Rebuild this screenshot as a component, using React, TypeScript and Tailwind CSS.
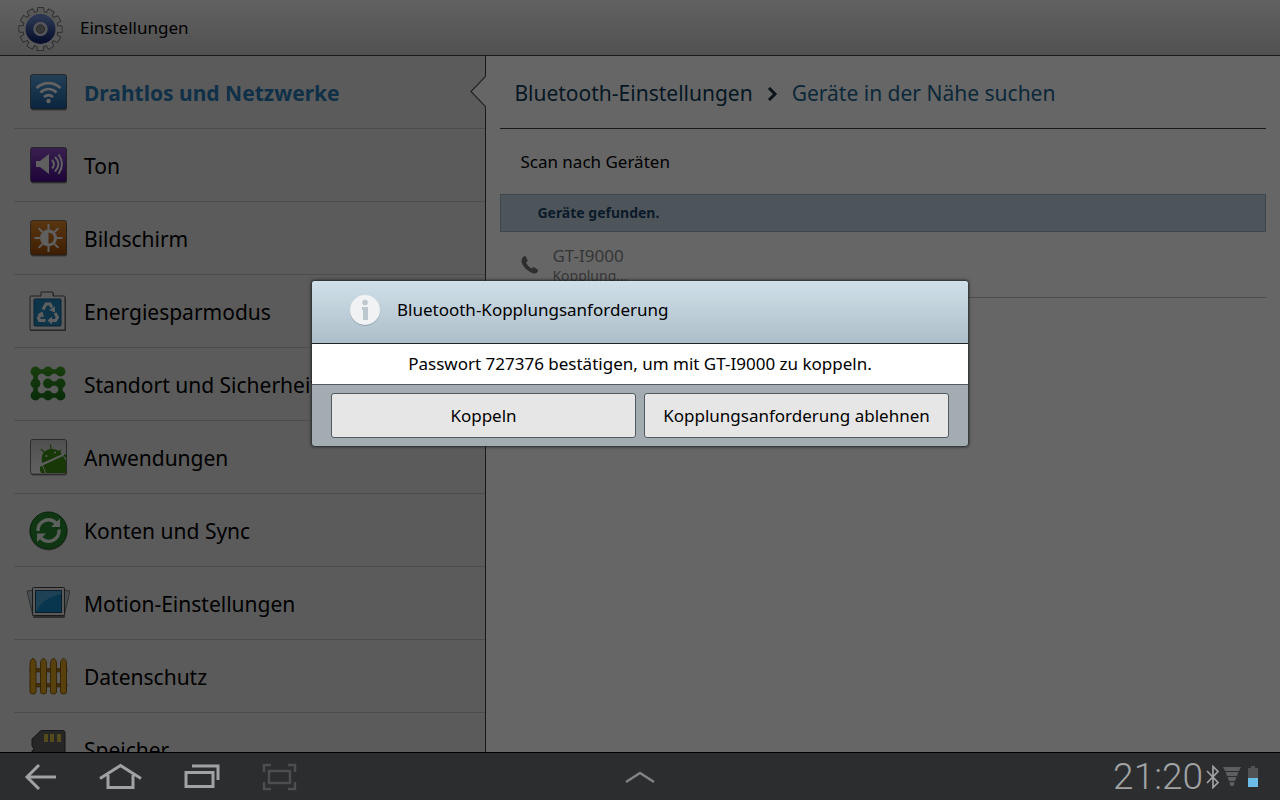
import type { ReactNode } from "react";

type SettingsItem = {
  id: string;
  label: string;
  icon: ReactNode;
};

function Tile({ id, from, to, children }: { id: string; from: string; to: string; children: ReactNode }) {
  return (
    <svg viewBox="0 0 44 44" className="h-11 w-11 shrink-0" aria-hidden>
      <defs>
        <linearGradient id={id} x1="0" y1="0" x2="0" y2="1">
          <stop offset="0" stopColor={from} />
          <stop offset="1" stopColor={to} />
        </linearGradient>
      </defs>
      <rect x="5" y="6" width="36" height="34.500" rx="2" fill="#888" />
      <rect x="4.500" y="4.500" width="36" height="34.500" rx="2" fill={`url(#${id})`} stroke="#444" strokeOpacity="0.7" />
      {children}
    </svg>
  );
}

function IconGear() {
  return (
    <svg viewBox="0 0 48 48" className="h-12 w-12 shrink-0" aria-hidden>
      <defs>
        <linearGradient id="gear-ring" x1="0" y1="0" x2="0" y2="1">
          <stop offset="0" stopColor="#6b88cc" />
          <stop offset="1" stopColor="#142a70" />
        </linearGradient>
      </defs>
      <g fill="#dcdcdc" stroke="#7a7a7a" strokeWidth="1.200" strokeLinejoin="round">
        {[0, 30, 60, 90, 120, 150, 180, 210, 240, 270, 300, 330].map((angle) => (
          <path key={angle} d="M21 9l.7-5.500h6L28 9z" transform={`rotate(${angle} 24.500 25)`} />
        ))}
        <circle cx="24.500" cy="25" r="17.500" />
      </g>
      <g fill="#dcdcdc">
        {[0, 30, 60, 90, 120, 150, 180, 210, 240, 270, 300, 330].map((angle) => (
          <path key={angle} d="M21.700 10l.6-6h4.800l.6 6z" transform={`rotate(${angle} 24.500 25)`} />
        ))}
        <circle cx="24.500" cy="25" r="17" />
      </g>
      <circle cx="24.500" cy="25" r="11" fill="none" stroke="url(#gear-ring)" strokeWidth="8" />
      <circle cx="24.500" cy="25" r="5.700" fill="#8a8a8a" stroke="#d0d4dc" strokeWidth="2.800" />
      <circle cx="24.500" cy="25" r="4.200" fill="none" stroke="#5a5a5a" strokeWidth="0.800" />
    </svg>
  );
}

function IconWifi() {
  return (
    <Tile id="tile-wifi" from="#5aa3dc" to="#1c5a9c">
      <g fill="none" stroke="#f4f4f4" strokeWidth="2.800">
        <path d="M10.500 18c7-6.500 17-6.500 24 0" />
        <path d="M14.500 22.500c5-4.500 11-4.500 16 0" />
        <path d="M18 27c3-2.500 6-2.500 9 0" />
      </g>
      <circle cx="22.500" cy="31" r="2.200" fill="#f4f4f4" />
    </Tile>
  );
}

function IconSound() {
  return (
    <Tile id="tile-sound" from="#8d50c8" to="#4a0a8c">
      <path d="M10 18h4l9-7v20l-9-7h-4z" fill="#eee" />
      <path d="M26 17q4 4.500 0 8.500M29 14q7 7 0 14.500M32.500 11.500q7 9 0 19.500" fill="none" stroke="#eee" strokeWidth="2" />
    </Tile>
  );
}

function IconDisplay() {
  return (
    <Tile id="tile-display" from="#e0882a" to="#9c4c08">
      <g stroke="#eee" strokeWidth="2">
        {[0, 45, 90, 135, 180, 225, 270, 315].map((angle) => (
          <path key={angle} d="M22.500 8v6" transform={`rotate(${angle} 22.500 22)`} />
        ))}
        <circle cx="22.500" cy="22" r="7" fill="none" strokeWidth="3" />
      </g>
      <path d="M22.500 15a7 7 0 000 14z" fill="#eee" />
    </Tile>
  );
}

function IconEnergy() {
  return (
    <svg viewBox="0 -1 44 44" className="h-11 w-11 shrink-0" aria-hidden>
      <path d="M5 7h11V3h12v4h11q1 0 1 1v33H4V8q0-1 1-1z" fill="#777" />
      <path d="M5 6h10V2h12v4h11q1 0 1 1v32q0 1-1 1H5q-1 0-1-1V7q0-1 1-1z" fill="#e6e6e6" stroke="#555" />
      <rect x="8" y="9" width="27" height="27" rx="1" fill="#2482b8" stroke="#145a88" />
      <g fill="none" stroke="#f0f0f0" strokeWidth="3">
        <path d="M17 19.500l3-5.500h4l2 3.500" />
        <path d="M29 23l2.500 4.500-2 3h-4" />
        <path d="M19.500 30.500h-6l-1-2.500 2.500-4" />
      </g>
      <path d="M23 20l6-3.500v6zM26 26.500v8l-4.500-4zM11.500 24.500l5-3 1.500 6z" fill="#f0f0f0" />
    </svg>
  );
}

function IconSecurity() {
  return (
    <svg viewBox="0 0 44 44" className="h-11 w-11 shrink-0" aria-hidden>
      <defs>
        <linearGradient id="pattern-green" gradientUnits="userSpaceOnUse" x1="0" y1="4" x2="0" y2="40">
          <stop offset="0" stopColor="#409a20" />
          <stop offset="1" stopColor="#146a1c" />
        </linearGradient>
      </defs>
      <path d="M34.500 9.500h-25v24h25v-12H22" fill="none" stroke="url(#pattern-green)" strokeWidth="4.500" />
      <g fill="url(#pattern-green)">
        {[9.5, 21.5, 33.5].map((y) => [9.5, 22, 34.5].map((x) => <circle key={`${x}-${y}`} cx={x} cy={y} r="4.900" />))}
      </g>
    </svg>
  );
}

function IconApps() {
  return (
    <Tile id="tile-apps" from="#c8c8c8" to="#f4f4f4">
      <g fill="#3c8c14">
        <path d="M16 28q-2-12 8-14 9-1 12.500 6z" />
        <path d="M17 30l20-9 3 5v12H20z" />
        <path d="M14 32q2-2 3 0l2 6h-4l-1-3zM37 20q2-1.500 3.500 0v4z" />
      </g>
      <path d="M18 17l-3-3M25 14l-.5-4.500M33 17l2-2" stroke="#3c8c14" strokeWidth="1.200" />
      <path d="M15.500 30L38 19" stroke="#eee" strokeWidth="1.400" />
      <circle cx="20.500" cy="21" r="1" fill="#eee" />
      <circle cx="29" cy="17.500" r="1" fill="#eee" />
    </Tile>
  );
}

function IconSync() {
  return (
    <svg viewBox="0 0 44 44" className="h-11 w-11 shrink-0" aria-hidden>
      <circle cx="22.500" cy="23.500" r="19" fill="#888" />
      <circle cx="22.500" cy="22.500" r="18.500" fill="#26862f" stroke="#145a1c" />
      <g fill="none" stroke="#e8f0e8" strokeWidth="3.400">
        <path d="M12 23a10.500 10.500 0 0118-8" />
        <path d="M33 21.500a10.500 10.500 0 01-18 8.500" />
      </g>
      <path d="M34 10.500v8.500h-9zM11 34v-8.500h9z" fill="#e8f0e8" />
    </svg>
  );
}

function IconMotion() {
  return (
    <svg viewBox="0 -2 44 44" className="h-11 w-11 shrink-0" aria-hidden>
      <path d="M1 8l8-1 2 25-4 1zM44 8l-8-1-2 25 4 1z" fill="#b4c4cc" stroke="#777" />
      <rect x="7" y="6" width="32" height="29" rx="1" fill="#777" />
      <rect x="6.500" y="4.500" width="32" height="28" rx="1" fill="#e0e0e0" stroke="#444" />
      <rect x="9.500" y="7.500" width="26" height="22" fill="#1688c4" stroke="#1a4a68" />
      <path d="M10 8h25v3Q16 15 10 29z" fill="#4ca4d4" />
    </svg>
  );
}

function IconPrivacy() {
  return (
    <svg viewBox="0 -1 44 44" className="h-11 w-11 shrink-0" aria-hidden>
      <path d="M4 13.500h37v3.500H4zM4 28.500h37V32H4z" fill="#a87814" stroke="#6a4a10" strokeWidth="0.600" />
      <g fill="#dca420" stroke="#80580c" strokeWidth="0.900">
        {[4, 14.5, 24.5, 34.5].map((x) => (
          <path key={x} d={`M${x} 8q0-3 3-5 3 2 3 5v29q0 2-3 2t-3-2z`} />
        ))}
      </g>
    </svg>
  );
}

function IconStorage() {
  return (
    <svg viewBox="0 0 44 44" className="h-11 w-11 shrink-0" aria-hidden>
      <path d="M6 12l9-8.500h22q2 0 2 2V42H6V24l2-2-2-3z" fill="#606060" stroke="#3a3a3a" />
      <path d="M18 7h4v8h-4zM24 7h4v8h-4zM31 7h4v8h-4z" fill="#d0bc48" />
    </svg>
  );
}

const ITEMS: SettingsItem[] = [
  { id: "wireless", label: "Drahtlos und Netzwerke", icon: <IconWifi /> },
  { id: "sound", label: "Ton", icon: <IconSound /> },
  { id: "display", label: "Bildschirm", icon: <IconDisplay /> },
  { id: "energy", label: "Energiesparmodus", icon: <IconEnergy /> },
  { id: "security", label: "Standort und Sicherheit", icon: <IconSecurity /> },
  { id: "apps", label: "Anwendungen", icon: <IconApps /> },
  { id: "sync", label: "Konten und Sync", icon: <IconSync /> },
  { id: "motion", label: "Motion-Einstellungen", icon: <IconMotion /> },
  { id: "privacy", label: "Datenschutz", icon: <IconPrivacy /> },
  { id: "storage", label: "Speicher", icon: <IconStorage /> },
];

function Sidebar() {
  return (
    <nav className="relative w-[38%] shrink-0 border-r border-[#404040] bg-[#e4e4e4]" aria-label="Einstellungen">
      <ul className="pl-3.5">
        {ITEMS.map((item) => (
          <li key={item.id} className="h-[73px] border-b border-[#bdbdbd]">
            <a
              href={`#${item.id}`}
              className={
                item.id === "wireless"
                  ? "flex h-full items-center gap-3.5 pl-3 text-[21px] font-bold text-[#2878b4]"
                  : "flex h-full items-center gap-3.5 pl-3 text-[21px] text-black"
              }
            >
              {item.icon}
              <span className="pt-[3px] whitespace-nowrap">{item.label}</span>
            </a>
          </li>
        ))}
      </ul>
      <svg viewBox="0 0 17 36" className="absolute top-[18px] -right-px h-9 w-[17px]" aria-hidden>
        <path d="M17 2L2 17.500 17 33z" fill="#fff" />
        <path d="M16.500 1v1.500L2 17.500l14.500 15V35" fill="none" stroke="#555" strokeWidth="1.200" />
      </svg>
    </nav>
  );
}

function DeviceSearch() {
  return (
    <main className="min-w-0 flex-1 bg-white px-3.5">
      <h1 className="flex h-[73px] items-center gap-3.5 border-b border-[#404040] pt-[3px] pl-3.5 text-[21px] text-[#0e3c58]">
        <a href="#bluetooth">Bluetooth-Einstellungen</a>
        <svg viewBox="0 0 11 14" className="h-3.5 w-[11px]" aria-hidden>
          <path d="M2 1l6 6-6 6" fill="none" stroke="#1c3444" strokeWidth="3" />
        </svg>
        <span className="text-[#1c648f]">Geräte in der Nähe suchen</span>
      </h1>
      <button type="button" className="flex h-[65px] w-full items-center pl-5 text-[17px] text-black">
        Scan nach Geräten
      </button>
      <h2 className="flex h-[38px] items-center border border-[#94b0c0] bg-[#c0d4e0] pl-9 text-sm font-bold text-[#1c4468]">
        Geräte gefunden.
      </h2>
      <div className="flex h-[66px] items-center gap-3 border-b border-[#bdbdbd] pl-5">
        <svg viewBox="0 0 20 20" className="h-5 w-5 shrink-0" aria-hidden>
          <path d="M3 2q2-2 3 0l1.500 3q.5 1.500-1.500 2.500 1.500 4 5.500 6 1.500-2 3-1l3 2q1.500 1.500-.5 3-2 2-6 0Q3 13 1.500 7 1 4 3 2z" fill="#747474" />
        </svg>
        <div className="pt-0.5 text-[#888]">
          <p className="text-[17px] leading-5">GT-I9000</p>
          <p className="text-sm">Kopplung...</p>
        </div>
      </div>
    </main>
  );
}

function PairingDialog() {
  return (
    <div className="absolute inset-0 flex items-center justify-center bg-black/60 pb-[25px]">
      <div
        role="dialog"
        aria-labelledby="pairing-title"
        className="w-[656px] overflow-hidden rounded-[3px] bg-[#a2acb1] text-[17px] text-black shadow-[0_0_3px_1px_#202428]"
      >
        <div className="flex h-[63px] items-center gap-4 border-b border-[#1c242a] bg-linear-to-b from-[#d0e0e9] to-[#acbec9] pb-1 pl-[37px]">
          <svg viewBox="0 0 32 32" className="h-8 w-8" aria-hidden>
            <circle cx="16" cy="17" r="15" fill="#94a4ae" />
            <circle cx="16" cy="16" r="15" fill="#f0f2f3" />
            <circle cx="16" cy="8.500" r="2.800" fill="#bcc8ce" />
            <path d="M13 13h6v13h-5V16h-1z" fill="#bcc8ce" />
          </svg>
          <h2 id="pairing-title">Bluetooth-Kopplungsanforderung</h2>
        </div>
        <p className="flex h-[41px] items-center justify-center border-b border-[#505a60] bg-white">
          Passwort 727376 bestätigen, um mit GT-I9000 zu koppeln.
        </p>
        <div className="grid grid-cols-2 gap-2 px-[19px] py-2">
          <button type="button" className="h-[45px] rounded-[3px] border border-[#505a60] bg-[#e6e6e6]">
            Koppeln
          </button>
          <button type="button" className="h-[45px] rounded-[3px] border border-[#505a60] bg-[#e6e6e6] whitespace-nowrap">
            Kopplungsanforderung ablehnen
          </button>
        </div>
      </div>
    </div>
  );
}

function SystemBar() {
  return (
    <footer className="grid h-12 shrink-0 grid-cols-3 items-center border-t border-black bg-[#2b2d2f] px-[18px]">
      <div className="flex items-center gap-9">
        <button type="button" aria-label="Zurück">
          <svg viewBox="0 0 44 32" className="h-8 w-11" fill="none" stroke="#a0a2a4" strokeWidth="3" aria-hidden>
            <path d="M21 4L9 16l12 12M9 16h29" />
          </svg>
        </button>
        <button type="button" aria-label="Startseite">
          <svg viewBox="0 0 44 32" className="h-8 w-11" fill="none" stroke="#a0a2a4" strokeWidth="3" aria-hidden>
            <path d="M2 17.500L22.500 4.500 43 17.500M10 14v12.500h25V14" />
          </svg>
        </button>
        <button type="button" aria-label="Letzte Anwendungen">
          <svg viewBox="0 0 44 32" className="h-8 w-11" fill="none" stroke="#a0a2a4" strokeWidth="3" aria-hidden>
            <path d="M8 11.500h27v14H8zM14 5h26v14" />
          </svg>
        </button>
        <button type="button" aria-label="Bildschirmfoto">
          <svg viewBox="0 0 44 32" className="h-8 w-11" fill="none" stroke="#4c4e50" strokeWidth="2.500" aria-hidden>
            <path d="M11 10h21v12H11zM6 11V4h7M30 4h7v7M37 21v7h-7M13 28H6v-7" />
          </svg>
        </button>
      </div>
      <button type="button" className="justify-self-center" aria-label="Aufklappen">
        <svg viewBox="0 0 32 16" className="h-4 w-8" fill="none" stroke="#808284" strokeWidth="2.500" aria-hidden>
          <path d="M2 13l14-9 14 9" />
        </svg>
      </button>
      <div className="flex items-center justify-end gap-[3px]">
        <time className="font-['Roboto'] text-[37px] leading-none font-light text-[#a0a2a4]">21:20</time>
        <svg viewBox="0 0 14 24" className="h-6 w-3.5" fill="none" stroke="#a0a2a4" strokeWidth="1.700" aria-hidden>
          <path d="M1 6l11 11.500-5 5V1.500l5 5L1 18" />
        </svg>
        <svg viewBox="0 0 18 22" className="h-[22px] w-[18px]" aria-hidden>
          <path d="M0 1h18l-2 4H2zM2.500 6h13L14 10H4zM4.500 11h9L12 15H6zM6.500 16h5l-1 4h-3z" fill="#5c5e60" />
        </svg>
        <svg viewBox="0 0 18 22" className="h-[22px] w-[18px]" aria-hidden>
          <path d="M7 0h4v2h3v11H4V2h3z" fill="#505254" />
          <path d="M4 12h10v9H4z" fill="#6cbce8" />
        </svg>
      </div>
    </footer>
  );
}

export default function App() {
  return (
    <div className="flex h-screen flex-col overflow-hidden font-['Noto_Sans',sans-serif]">
      <div className="relative flex min-h-0 flex-1 flex-col overflow-hidden">
        <header className="flex h-14 shrink-0 items-center gap-4 border-b border-[#404040] bg-linear-to-b from-[#f4f4f4] to-[#cacaca] pl-4 text-[17px] text-black">
          <IconGear />
          <span>Einstellungen</span>
        </header>
        <div className="flex min-h-0 flex-1">
          <Sidebar />
          <DeviceSearch />
        </div>
        <PairingDialog />
      </div>
      <SystemBar />
    </div>
  );
}
